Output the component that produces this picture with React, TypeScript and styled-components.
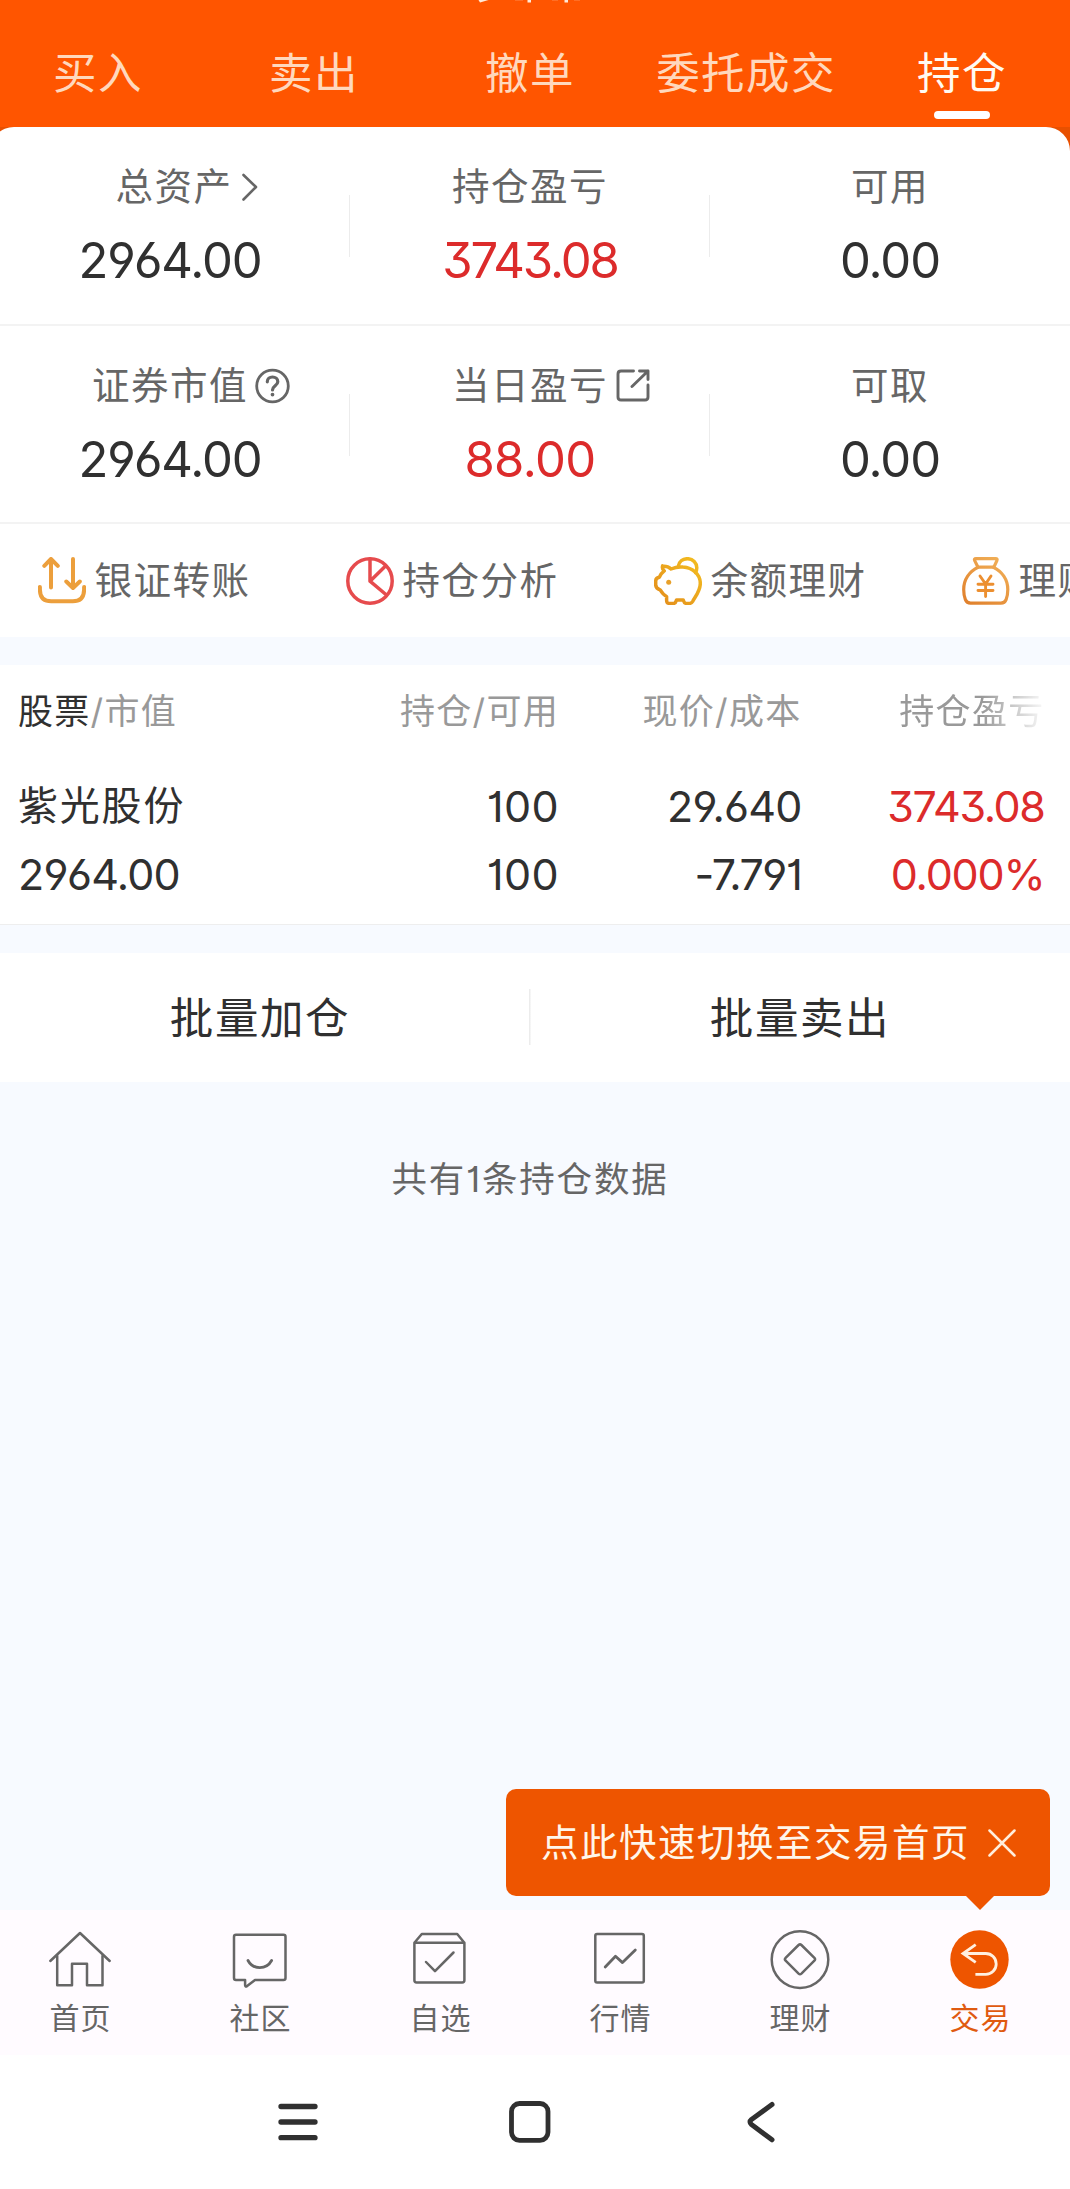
import React from "react";
import styled, { createGlobalStyle } from "styled-components";

const GlobalStyle = createGlobalStyle`
  *, *::before, *::after { box-sizing: border-box; }
  body {
    margin: 0;
    overflow-x: hidden;
    background: #f7faff;
    font-family: Inter, "Noto Sans CJK SC", sans-serif;
    font-feature-settings: "cv01", "cv03", "cv04", "cv09";
  }
  svg { display: block; flex: none; }
`;

const Screen = styled.div`
  display: flex;
  flex-direction: column;
  width: 1080px;
  height: 2189px;
  margin-left: -10px;
  overflow: hidden;
`;

const Header = styled.header`
  position: relative;
  height: 127px;
  background: #ff5500;
`;

const TitleEdge = styled.svg`
  position: absolute;
  top: 0;
  left: 480px;
`;

const Tabs = styled.nav`
  display: grid;
  grid-template-columns: repeat(5, 1fr);
  padding-top: 47px;
`;

const Tab = styled.div<{ $active?: boolean }>`
  display: flex;
  flex-direction: column;
  align-items: center;
  gap: 12px;
  font-size: 43.5px;
  line-height: 52px;
  letter-spacing: 1.4px;
  white-space: nowrap;
  color: ${(p) => (p.$active ? "#fffaf2" : "#ffd8bd")};
`;

const TabBar = styled.span`
  width: 56px;
  height: 8px;
  border-radius: 4px;
  background: #fff;
`;

const CardBack = styled.div`
  background: #e85000;
`;

const Card = styled.section`
  background: #fff;
  border-radius: 24px 24px 0 0;
`;

const SummaryRow = styled.div`
  display: grid;
  grid-template-columns: repeat(3, 360px);
  height: 198px;
  border-bottom: 2px solid #f3f3f3;
  &:first-child { height: 199px; }
`;

const Stat = styled.div`
  display: flex;
  flex-direction: column;
  align-items: center;
  padding-top: 37px;
  background: linear-gradient(#ececec, #ececec) right 68px / 1.5px 62px no-repeat;
  &:last-child { background: none; }
`;

const StatLabel = styled.div<{ $shift?: number }>`
  display: flex;
  align-items: center;
  height: 46px;
  margin-left: ${(p) => p.$shift ?? 0}px;
  font-size: 37.5px;
  letter-spacing: 1.5px;
  line-height: 46px;
  color: #666;
`;

const LabelIcon = styled.span<{ $gap: number; $width: number }>`
  width: ${(p) => p.$width}px;
  margin-left: ${(p) => p.$gap}px;
  margin-right: ${(p) => -p.$gap - p.$width}px;
`;

const StatValue = styled.div<{ $up?: boolean; $track?: number }>`
  margin-top: 21px;
  font-size: 49px;
  line-height: 60px;
  letter-spacing: ${(p) => p.$track ?? -1.1}px;
  color: ${(p) => (p.$up ? "#dc2b2b" : "#303030")};
`;

const Actions = styled.div`
  display: flex;
  height: 113px;
  padding-left: 48px;
  overflow: hidden;
`;

const Action = styled.div`
  display: flex;
  flex: none;
  align-items: center;
  gap: 8.5px;
  width: 308px;
  font-size: 37.5px;
  line-height: 46px;
  letter-spacing: 1.5px;
  white-space: nowrap;
  color: #666;
`;

const Holdings = styled.section`
  display: grid;
  grid-template-columns: 295px 246px 242.5px 243px;
  grid-template-rows: 105px 72px 63px;
  align-items: center;
  height: 260px;
  margin-top: 28px;
  padding-left: 28px;
  background: #fff;
  border-bottom: 1.5px solid #eeeeee;
`;

const HeadCell = styled.div<{ $left?: boolean }>`
  padding-bottom: 14px;
  text-align: ${(p) => (p.$left ? "left" : "right")};
  font-size: 35px;
  line-height: 44px;
  letter-spacing: 1.3px;
  white-space: nowrap;
  color: #999;
`;

const FadingHead = styled(HeadCell)`
  mask-image: linear-gradient(to right, #000 180px, transparent 246px);
`;

const Strong = styled.span`
  color: #303030;
`;

const Cell = styled.div<{ $up?: boolean; $left?: boolean; $name?: boolean; $track?: number }>`
  text-align: ${(p) => (p.$left ? "left" : "right")};
  font-size: ${(p) => (p.$name ? 40 : 43)}px;
  letter-spacing: ${(p) => p.$track ?? -0.8}px;
  line-height: 56px;
  color: ${(p) => (p.$up ? "#dc2b2b" : "#303030")};
`;

const Batch = styled.section`
  display: grid;
  grid-template-columns: 1fr 1fr;
  height: 129px;
  margin-top: 28px;
  background: linear-gradient(#ececec, #ececec) center 36px / 1.5px 56px no-repeat #fff;
`;

const BatchButton = styled.button`
  border: 0;
  padding: 0;
  background: none;
  font: inherit;
  font-size: 43.5px;
  line-height: 52px;
  letter-spacing: 1.6px;
  color: #303030;
`;

const Count = styled.p`
  flex: 1;
  margin: 0;
  padding-top: 73px;
  text-align: center;
  font-size: 35.5px;
  letter-spacing: 1.8px;
  line-height: 50px;
  color: #666;
`;

const BottomNav = styled.nav`
  position: relative;
  display: grid;
  grid-template-columns: repeat(6, 180px);
  height: 145px;
  background: #fffbff;
`;

const NavItem = styled.div<{ $active?: boolean }>`
  display: flex;
  flex-direction: column;
  align-items: center;
  gap: 9px;
  padding-top: 20px;
  font-size: 30px;
  line-height: 38px;
  letter-spacing: 1.2px;
  text-indent: 1.2px;
  color: ${(p) => (p.$active ? "#e05a10" : "#666")};
`;

const Tip = styled.div`
  position: absolute;
  right: 20px;
  bottom: 159px;
  display: flex;
  align-items: center;
  gap: 18px;
  width: 544px;
  height: 107px;
  padding-left: 35px;
  border-radius: 10px;
  background: #ee5500;
  color: #fff6ea;
  font-size: 37.5px;
  line-height: 46px;
  letter-spacing: 1.5px;
  white-space: nowrap;
  &::after {
    content: "";
    position: absolute;
    top: 100%;
    right: 56px;
    border: solid transparent;
    border-width: 14px 14px 0;
    border-top-color: #ee5500;
  }
`;

const SystemNav = styled.div`
  display: flex;
  justify-content: center;
  align-items: center;
  gap: 172px;
  height: 134px;
  background: #fff;
`;

const line = { fill: "none", strokeLinecap: "round", strokeLinejoin: "round" } as const;

const Chevron = () => (
  <svg width="16" height="30" viewBox="0 0 16 30" {...line} stroke="#666" strokeWidth="2.6">
    <path d="M1.5 3 14 15 1.5 27.5" />
  </svg>
);

const Help = () => (
  <svg width="36" height="36" viewBox="0 0 36 36" {...line} stroke="#666" strokeWidth="2.8">
    <circle cx="17.500" cy="18" r="15.800" />
    <path d="M12.300 13.800c0-3 2.400-4.800 5.200-4.800s5.300 1.900 5.300 4.700c0 4-5.300 4.200-5.300 8.300" strokeWidth="3.200" />
    <circle cx="17.500" cy="26.600" r="1.100" fill="#666" strokeWidth="1.600" />
  </svg>
);

const Share = () => (
  <svg width="34" height="34" viewBox="0 0 34 34" {...line} stroke="#666" strokeWidth="2.9">
    <path d="M17.500 2H5Q2 2 2 5v23q0 3 3 3h24q3 0 3-3V16" />
    <path d="M23.500 2H32v8.500M32 2 16 17.500" />
  </svg>
);

const Transfer = () => (
  <svg width="48" height="48" viewBox="0 0 48 48" {...line} stroke="#ec9f3c" strokeWidth="4">
    <path d="M13 30.500V2M6.300 8.800 13 2l6.800 6.800M35 2v28.500M28.300 24.500l6.700 6.500 6.800-6.500" />
    <path d="M1.900 30v2.500q0 11.800 11.300 11.800h21.600q11.300 0 11.300-11.800V30" />
  </svg>
);

const Pie = () => (
  <svg width="48" height="48" viewBox="0 0 48 48" {...line} stroke="#e64b4d" strokeWidth="3.500">
    <circle cx="24" cy="24" r="22.200" />
    <path d="M24 2v22.200L39.500 9M24 24.200l16.500 13.800" />
  </svg>
);

const Piggy = () => (
  <svg width="48" height="48" viewBox="0 0 48 48" {...line} strokeWidth="3.500">
    <defs>
      <linearGradient id="pig" x1="0" y1="48" x2="48" y2="0" gradientUnits="userSpaceOnUse">
        <stop offset="0" stopColor="#e28a1c" />
        <stop offset="1" stopColor="#f4c020" />
      </linearGradient>
    </defs>
    <g stroke="url(#pig)">
      <path d="M24.200 9.500C25 4.200 29 1.700 33.500 1.700c5.500 0 9.300 4.200 9.300 9 0 2-.5 3.500-1.300 5" />
      <path d="M8.600 9.300c3-.3 6 .4 8.400 2.700 4-1.700 8-2.300 12-1.900 9.500.7 17.300 7 17.300 16.400 0 7.300-4.600 12.500-7.600 17.800-.9 1.500-1.600 2.100-3.200 2.100h-3.300c-2 0-2.300-1.300-3-3.500h-6.600c-.7 2.200-1.200 3.500-3 3.500h-4c-2.500 0-3-1.200-3-3.500v-3.400c-3.500-1.600-5-4.200-6.500-6.700-2.100-.8-4.400-2.500-4.400-5v-3.700c0-2.500 1.300-3.600 3.700-3.900 1-2.500 2.500-4.500 4.800-6.300-1.700-1.300-2.100-3-1.600-5Z" />
    </g>
    <circle cx="14.700" cy="25.200" r="2.500" fill="#e8a02a" />
  </svg>
);

const Bag = () => (
  <svg width="48" height="48" viewBox="0 0 48 48" {...line} strokeWidth="3.200">
    <defs>
      <linearGradient id="bag" x1="6" y1="48" x2="38" y2="4" gradientUnits="userSpaceOnUse">
        <stop offset="0" stopColor="#e0802c" />
        <stop offset="1" stopColor="#f0ad55" />
      </linearGradient>
    </defs>
    <g stroke="url(#bag)">
      <path d="M14 1.600h19.600q2.200 0 1.300 2l-3 6.600H16l-3.300-6.600q-1-2 1.300-2Z" />
      <path d="M16 10.200C7.500 14.500 1.700 22.500 1.700 32.500c0 4 .5 7.200 1.700 10.200q1.400 3.500 5.200 3.500h30.300q3.800 0 5.200-3.500c1.200-3 1.700-6.200 1.700-10.200 0-10-5.900-18-14.400-22.300" />
      <path d="m18 19 5.600 8 5.400-8M23.600 27v12.500M16 27.300h15M16 33.500h15" stroke="#ec8f30" strokeWidth="2.900" />
    </g>
  </svg>
);

const navLine = { ...line, width: 60, height: 60, viewBox: "0 0 60 60", stroke: "#666", strokeWidth: 2.5 };

const Home = () => (
  <svg {...navLine} overflow="visible">
    <path d="M.3 31 30 3l29.700 28" />
    <path d="M7.200 26v29.300H22V33.700h15v21.600h15.500V26" />
  </svg>
);

const Chat = () => (
  <svg {...navLine}>
    <path d="M6 4.800h47.500q2 0 2 2V48q0 2-2 2H25l-8.200 6.300q-1.600.8-1.700-1V50H6q-2 0-2-2V6.800q0-2 2-2Z" />
    <path d="M18 30.500c5 9.400 18.500 9.400 23.600 0" strokeWidth="2.800" />
  </svg>
);

const Favorites = () => (
  <svg {...navLine}>
    <path d="M4.400 12.700 11.800 4h35.400l7.200 8.700V50.300q0 2.200-2.200 2.200H6.600q-2.200 0-2.200-2.200ZM4.400 12.700h50" />
    <path d="m16 32 9 9.200 18.500-18.700" />
  </svg>
);

const Market = () => (
  <svg {...navLine}>
    <rect x="5.300" y="4" width="48.500" height="48.500" rx="1.800" />
    <path d="m15.200 37 10.300-10.800 7 6.400 12.800-12.600" strokeWidth="2.800" />
  </svg>
);

const Wealth = () => (
  <svg {...navLine}>
    <circle cx="30" cy="29.600" r="28.300" />
    <path d="M28.600 15q1.400-1.300 2.800 0l13 12.900q1.400 1.400 0 2.800l-13 12.900q-1.400 1.300-2.800 0l-13-12.900q-1.400-1.400 0-2.800Z" />
  </svg>
);

const Trade = () => (
  <svg {...navLine} stroke="#fff0e0" strokeWidth={2.8} strokeLinecap="butt" strokeLinejoin="miter">
    <circle cx="29.500" cy="29.500" r="29.200" fill="#ee5500" stroke="none" />
    <path d="M25.700 14.600 13 23.500l12.700 8.900M13 23.500h22.800a10.400 10.400 0 0 1 0 20.800H25.400" />
  </svg>
);

const Close = () => (
  <svg width="28" height="28" viewBox="0 0 28 28" {...line} stroke="#ffeedd" strokeWidth="2.500">
    <path d="m1.500 1.500 25 25m0-25-25 25" />
  </svg>
);

type StatData = {
  label: string;
  value: string;
  up?: boolean;
  icon?: React.ReactNode;
  width?: number;
  gap?: number;
  shift?: number;
  track?: number;
};

const stats: StatData[][] = [
  [
    { label: "总资产", value: "2964.00", icon: <Chevron />, width: 16, gap: 9, shift: 8 },
    { label: "持仓盈亏", value: "3743.08", up: true, track: -2.1 },
    { label: "可用", value: "0.00" },
  ],
  [
    { label: "证券市值", value: "2964.00", icon: <Help />, width: 36, gap: 7 },
    { label: "当日盈亏", value: "88.00", up: true, icon: <Share />, width: 34, gap: 8, track: -0.6 },
    { label: "可取", value: "0.00" },
  ],
];

const actions = [
  { icon: <Transfer />, label: "银证转账" },
  { icon: <Pie />, label: "持仓分析" },
  { icon: <Piggy />, label: "余额理财" },
  { icon: <Bag />, label: "理财" },
];

const navItems = [
  { icon: <Home />, label: "首页" },
  { icon: <Chat />, label: "社区" },
  { icon: <Favorites />, label: "自选" },
  { icon: <Market />, label: "行情" },
  { icon: <Wealth />, label: "理财" },
  { icon: <Trade />, label: "交易", active: true },
];

export default function App() {
  return (
    <>
      <GlobalStyle />
      <Screen>
        <Header>
          <TitleEdge width="110" height="4" viewBox="0 0 110 4" fill="#ffe9d8">
            <path d="M8.500 0h10L10 2.500ZM57.500 0h3.500v2.500h-3.500ZM94.500 0H98v2.500h-3.500Z" />
            <path d="M45 0h8v.6h-8ZM82 0h6v.6h-6ZM104 0h8v.6h-8Z" opacity=".35" />
          </TitleEdge>
          <Tabs>
            {["买入", "卖出", "撤单", "委托成交"].map((t) => (
              <Tab key={t}>{t}</Tab>
            ))}
            <Tab $active>
              持仓
              <TabBar />
            </Tab>
          </Tabs>
        </Header>

        <CardBack>
          <Card>
            {stats.map((row, i) => (
              <SummaryRow key={i}>
                {row.map((s) => (
                  <Stat key={s.label}>
                    <StatLabel $shift={s.shift}>
                      {s.label}
                      {s.icon && (
                        <LabelIcon $gap={s.gap ?? 0} $width={s.width ?? 0}>
                          {s.icon}
                        </LabelIcon>
                      )}
                    </StatLabel>
                    <StatValue $up={s.up} $track={s.track}>{s.value}</StatValue>
                  </Stat>
                ))}
              </SummaryRow>
            ))}
            <Actions>
              {actions.map((a) => (
                <Action key={a.label}>
                  {a.icon}
                  {a.label}
                </Action>
              ))}
            </Actions>
          </Card>
        </CardBack>

        <Holdings>
          <HeadCell $left>
            <Strong>股票</Strong>/市值
          </HeadCell>
          <HeadCell>持仓/可用</HeadCell>
          <HeadCell>现价/成本</HeadCell>
          <FadingHead>持仓盈亏</FadingHead>
          <Cell $left $name $track={1.8}>紫光股份</Cell>
          <Cell $track={0.4}>100</Cell>
          <Cell>29.640</Cell>
          <Cell $up $track={-1.4}>3743.08</Cell>
          <Cell $left>2964.00</Cell>
          <Cell $track={0.4}>100</Cell>
          <Cell $track={-1.5}>-7.791</Cell>
          <Cell $up $track={-1.2}>0.000%</Cell>
        </Holdings>

        <Batch>
          <BatchButton>批量加仓</BatchButton>
          <BatchButton>批量卖出</BatchButton>
        </Batch>

        <Count>共有1条持仓数据</Count>

        <BottomNav>
          {navItems.map((n) => (
            <NavItem key={n.label} $active={n.active}>
              {n.icon}
              {n.label}
            </NavItem>
          ))}
          <Tip>
            点此快速切换至交易首页
            <Close />
          </Tip>
        </BottomNav>

        <SystemNav>
          <svg width="60" height="44" viewBox="0 0 60 44" {...line} stroke="#303030" strokeWidth="5.300">
            <path d="M13 6.500h34M13 22h34M13 37.700h34" />
          </svg>
          <svg width="60" height="44" viewBox="0 0 60 44" {...line} stroke="#303030" strokeWidth="4.800">
            <rect x="11.500" y="3.500" width="36.500" height="36.800" rx="8" />
          </svg>
          <svg width="60" height="44" viewBox="0 0 60 44" {...line} stroke="#303030" strokeWidth="5">
            <path d="M40 4.500 19.500 19.500q-3 2.500 0 5L40 39.800" />
          </svg>
        </SystemNav>
      </Screen>
    </>
  );
}
